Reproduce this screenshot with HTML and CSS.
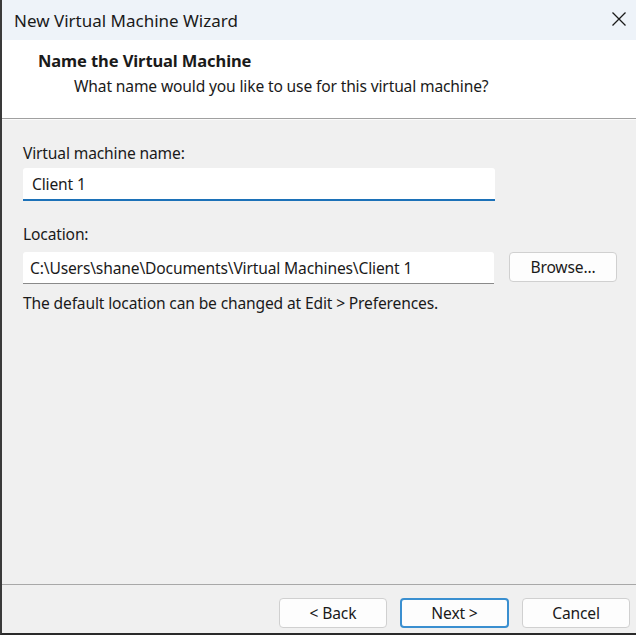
FILE: index.html
```html
<!DOCTYPE html>
<html>
<head>
<meta charset="utf-8">
<link rel="stylesheet" href="styles.css">
</head>
<body>
<div class="window">
  <div class="titlebar">
    <span class="title">New Virtual Machine Wizard</span>
    <svg class="close" width="16" height="16" viewBox="0 0 16 16"><path d="M1.5 1.5L14.5 14.5M14.5 1.5L1.5 14.5" stroke="#1a1a1a" stroke-width="1.3" fill="none"/></svg>
  </div>
  <div class="header">
    <div class="h-title">Name the Virtual Machine</div>
    <div class="h-sub">What name would you like to use for this virtual machine?</div>
  </div>
  <div class="body">
    <div class="label">Virtual machine name:</div>
    <div class="input name">Client 1</div>
    <div class="label loc">Location:</div>
    <div class="row">
      <div class="input path">C:\Users\shane\Documents\Virtual Machines\Client 1</div>
      <div class="btn browse">Browse...</div>
    </div>
    <div class="note">The default location can be changed at Edit &gt; Preferences.</div>
  </div>
  <div class="footer">
    <div class="btn">&lt; Back</div>
    <div class="btn primary">Next &gt;</div>
    <div class="btn">Cancel</div>
  </div>
</div>
</body>
</html>
```
FILE: styles.css
```css
html, body { margin: 0; padding: 0; }
body {
  width: 636px; height: 635px; overflow: hidden;
  font-family: "Noto Sans", "Open Sans", sans-serif;
  color: #1a1a1a;
  background: #f0f0f0;
}
.window {
  width: 634px; height: 633px;
  border-left: 2px solid #3a3a3a;
  border-bottom: 2px solid #2a2a2a;
  display: flex; flex-direction: column;
  background: #f0f0f0;
}
.titlebar {
  height: 40px; flex: none;
  background: #eef3f9;
  display: flex; align-items: center; justify-content: space-between;
  padding: 0 9px 0 12px;
}
.title { font-size: 17px; }
.close { margin-top: -3px; }
.header {
  height: 79px; flex: none;
  background: #fff;
  border-bottom: 1px solid #a0a0a0;
  padding: 10px 0 0 36px;
  box-sizing: border-box;
}
.h-title { font-size: 16.5px; font-weight: bold; letter-spacing: -0.1px; line-height: 22px; }
.h-sub { font-size: 15.6px; letter-spacing: -0.15px; padding-left: 36px; line-height: 22px; margin-top: 3px; }
.body {
  flex: 1; padding: 23px 19px 0 21px;
  font-size: 15.6px; letter-spacing: -0.15px;
  border-top: 1px solid #fbfbfb;
}
.label { line-height: 20px; }
.label.loc { margin-top: 23px; }
.input {
  background: #fff;
  height: 33px; box-sizing: border-box;
  padding: 0 9px; display: flex; align-items: center;
  border-radius: 3px 3px 0 0;
  white-space: nowrap;
}
.input.name { width: 472px; margin-top: 5px; border-bottom: 2px solid #1c71b8; }
.row { display: flex; align-items: flex-start; gap: 15px; margin-top: 8px; }
.input.path { width: 471px; height: 32px; border-bottom: 1px solid #8a8a8a; padding-left: 7px; }
.btn {
  box-sizing: border-box;
  height: 30px; width: 108px;
  border: 1px solid #d0d0d0; border-radius: 4px;
  background: #fdfdfd;
  display: flex; align-items: center; justify-content: center;
  font-size: 15.6px; letter-spacing: -0.15px;
}
.note { margin-top: 9px; line-height: 20px; }
.footer {
  height: 49px; flex: none; box-sizing: border-box;
  border-top: 1px solid #a8a8a8;
  display: flex; align-items: flex-start; justify-content: flex-end;
  gap: 13px; padding: 13px 6px 0 0;
}
.btn.primary { width: 109px; border: 2px solid #3a8fd0; }
```
